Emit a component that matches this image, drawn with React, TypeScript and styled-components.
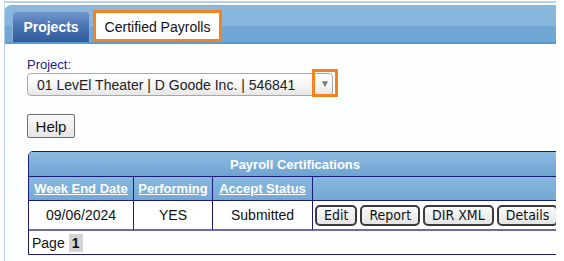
import styled, { createGlobalStyle } from 'styled-components'

const GlobalStyle = createGlobalStyle`
  html, body {
    margin: 0;
    padding: 0;
    background: #fff;
  }
  body {
    font-family: 'Liberation Sans', Arial, sans-serif;
  }
`

const Frame = styled.div`
  width: 556px;
  height: 261px;
  overflow: hidden;
  background: #fff;
`

const TopLine = styled.div`
  height: 2px;
  margin-top: 1px;
  margin-left: 4px;
  background: #b5d3ec;
`

const Page = styled.div`
  margin: 2px 0 0 4px;
  border-left: 1px solid #b3d1ea;
  height: 256px;
  background: #fdfefe;
`

const TabBar = styled.div`
  height: 36px;
  display: flex;
  align-items: flex-end;
  gap: 3px;
  padding-left: 7px;
  border-top: 1px solid #7fb1dc;
  border-bottom: 2px solid #5c9ad2;
  border-top-left-radius: 6px;
  background: linear-gradient(180deg, #8bb8dd 0%, #86b5dc 55%, #72a8d4 56%, #6ea6d3 100%);
`

interface TabProps {
  active?: boolean
}

const Tab = styled.div<TabProps>`
  box-sizing: border-box;
  height: ${(p) => (p.active ? '32px' : '31px')};
  display: flex;
  align-items: center;
  justify-content: center;
  font-size: 14px;
  border-radius: 5px 5px 0 0;
  ${(p) =>
    p.active
      ? `
    width: 129px;
    background: #fff;
    border: 3px solid #f5821f;
    border-radius: 0;
    color: #111;
    padding-top: 1px;
  `
      : `
    width: 78px;
    color: #fff;
    font-weight: bold;
    border: 1px solid #8fb1dc;
    border-bottom: none;
    background: linear-gradient(180deg, #7397cc 0%, #4f78b6 40%, #2f5c9d 100%);
  `}
`

const Content = styled.div`
  padding: 13px 0 0 22px;
`

const Label = styled.div`
  font-size: 13px;
  color: #1c1c8e;
  line-height: 15px;
`

const SelectRow = styled.div`
  position: relative;
  margin-top: 1px;
  width: 306px;
`

const Select = styled.div`
  box-sizing: border-box;
  height: 23px;
  display: flex;
  align-items: center;
  padding-left: 9px;
  font-size: 14px;
  color: #222;
  border: 1px solid #a8a8a8;
  border-radius: 4px;
  background: linear-gradient(180deg, #ffffff 0%, #f4f4f4 60%, #e6e6e6 100%);
`

const ArrowBox = styled.div`
  position: absolute;
  left: 285px;
  top: -4px;
  box-sizing: border-box;
  width: 26px;
  height: 28px;
  border: 3px solid #f5821f;
  display: flex;
  align-items: center;
  justify-content: center;
  color: #7a7a7a;
  font-size: 10px;
  padding-top: 1px;
`

const Button = styled.button`
  box-sizing: border-box;
  font-family: 'Liberation Sans', Arial, sans-serif;
  font-size: 15px;
  color: #111;
  height: 24px;
  width: 48px;
  padding: 0;
  border: 1px solid #6f6f6f;
  border-radius: 2px;
  background: linear-gradient(180deg, #fafafa 0%, #e6e6e6 100%);
`

const HelpRow = styled.div`
  margin-top: 18px;
`

const Table = styled.div`
  margin-top: 13px;
  margin-left: 1px;
  width: 532px;
  border: 1px solid #1c1c78;
  border-top-left-radius: 5px;
  border-top-right-radius: 5px;
  font-size: 14px;
  overflow: hidden;
`

const Caption = styled.div`
  height: 24px;
  display: flex;
  align-items: center;
  justify-content: center;
  color: #fff;
  font-weight: bold;
  font-size: 13px;
  border-bottom: 1px solid #1c1c78;
  background: linear-gradient(180deg, #8dbbe0 0%, #7cafda 55%, #6ea3d0 100%);
`

const Grid = styled.div`
  display: grid;
  grid-template-columns: 105px 79px 100px 1fr;
`

const HeadCell = styled.div`
  height: 23px;
  display: flex;
  align-items: center;
  justify-content: center;
  color: #fff;
  font-weight: bold;
  font-size: 13px;
  text-decoration: underline;
  border-right: 1px solid #1c1c78;
  border-bottom: 1px solid #1c1c78;
  background: linear-gradient(180deg, #86b7de 0%, #74a9d5 100%);

  &:last-child {
    border-right: none;
  }
`

const Cell = styled.div`
  height: 28px;
  display: flex;
  align-items: center;
  justify-content: center;
  color: #111;
  border-right: 1px solid #1c1c78;
  border-bottom: 2px solid #7069b0;
  background: #fff;

  &:last-child {
    border-right: none;
    justify-content: flex-start;
    padding-left: 2px;
    gap: 3px;
  }
`

const RowButton = styled.button`
  box-sizing: border-box;
  height: 21px;
  padding: 0 7px;
  font-family: 'DejaVu Sans Condensed', 'DejaVu Sans', sans-serif;
  font-size: 14px;
  color: #111;
  border: 2px solid #3a3a3a;
  border-radius: 5px;
  background: linear-gradient(180deg, #fbfbfb 0%, #e4e4e4 100%);
`

const Pager = styled.div`
  height: 23px;
  display: flex;
  align-items: center;
  gap: 4px;
  padding-left: 3px;
  color: #111;
  background: #fff;
`

const PageNum = styled.span`
  background: #d4d4d4;
  font-weight: bold;
  padding: 1px 3px;
`

export default function App() {
  return (
    <>
      <GlobalStyle />
      <Frame>
        <TopLine />
        <Page>
          <TabBar>
            <Tab>Projects</Tab>
            <Tab active>Certified Payrolls</Tab>
          </TabBar>
          <Content>
            <Label>Project:</Label>
            <SelectRow>
              <Select>01 LevEl Theater | D Goode Inc. | 546841</Select>
              <ArrowBox>▼</ArrowBox>
            </SelectRow>
            <HelpRow>
              <Button>Help</Button>
            </HelpRow>
            <Table>
              <Caption>Payroll Certifications</Caption>
              <Grid>
                <HeadCell>Week End Date</HeadCell>
                <HeadCell>Performing</HeadCell>
                <HeadCell>Accept Status</HeadCell>
                <HeadCell />
                <Cell>09/06/2024</Cell>
                <Cell>YES</Cell>
                <Cell>Submitted</Cell>
                <Cell>
                  <RowButton>Edit</RowButton>
                  <RowButton>Report</RowButton>
                  <RowButton>DIR XML</RowButton>
                  <RowButton>Details</RowButton>
                </Cell>
              </Grid>
              <Pager>
                Page <PageNum>1</PageNum>
              </Pager>
            </Table>
          </Content>
        </Page>
      </Frame>
    </>
  )
}
